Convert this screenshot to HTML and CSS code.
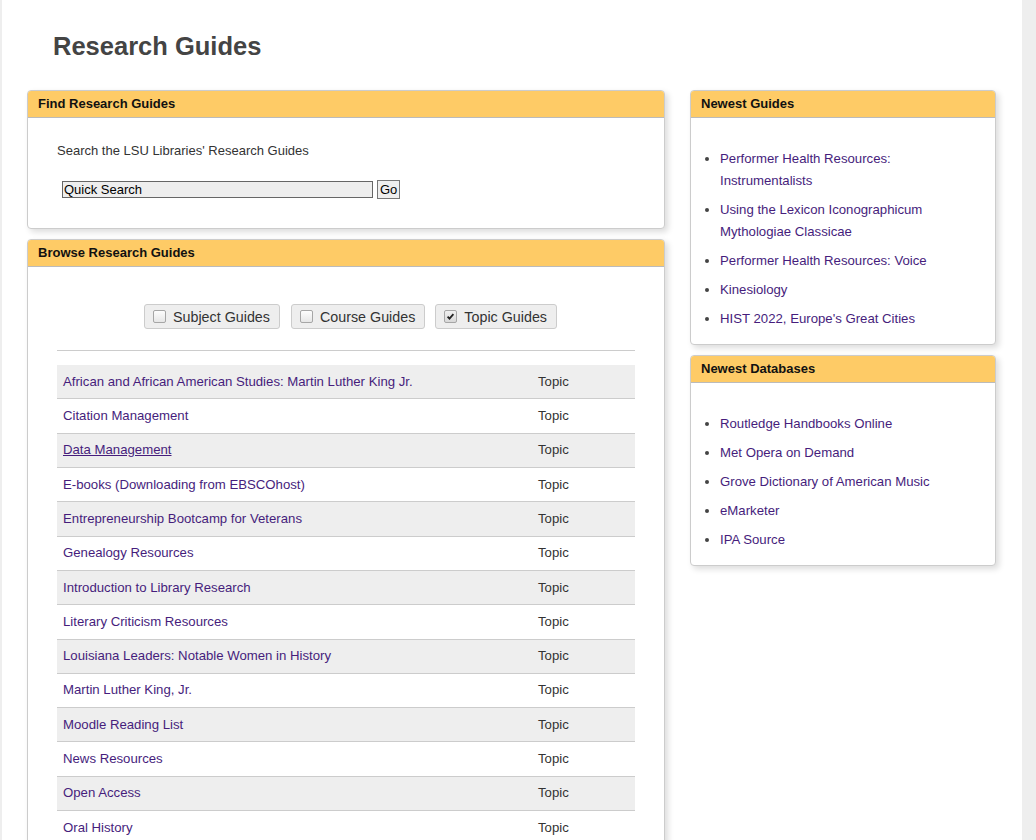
FILE: index.html
```html
<!DOCTYPE html>
<html lang="en">
<head>
<meta charset="utf-8">
<title>Research Guides</title>
<link rel="stylesheet" href="styles.css">
</head>
<body>
<div class="page">
  <h1 class="title">Research Guides</h1>
  <div class="columns">
    <div class="main-col">
      <section class="panel">
        <div class="panel-head">Find Research Guides</div>
        <div class="panel-body find-body">
          <p class="intro">Search the LSU Libraries' Research Guides</p>
          <form class="search-row">
            <input class="search-input" type="text" value="Quick Search">
            <button class="go-btn" type="button">Go</button>
          </form>
        </div>
      </section>
      <section class="panel">
        <div class="panel-head">Browse Research Guides</div>
        <div class="panel-body browse-body">
          <div class="filters">
            <span class="filter f1"><span class="cb"></span>Subject Guides</span>
            <span class="filter f2"><span class="cb"></span>Course Guides</span>
            <span class="filter f3"><span class="cb checked"><svg viewBox="0 0 13 13" width="13" height="13"><path d="M3.6 6.6 L5.5 8.6 L9.4 4.2" fill="none" stroke="#222" stroke-width="1.8"/></svg></span>Topic Guides</span>
          </div>
          <hr class="rule">
          <table class="guides">
            <tr><td class="name"><a href="#">African and African American Studies: Martin Luther King Jr.</a></td><td class="type">Topic</td></tr>
            <tr><td class="name"><a href="#">Citation Management</a></td><td class="type">Topic</td></tr>
            <tr><td class="name"><a href="#" class="ul">Data Management</a></td><td class="type">Topic</td></tr>
            <tr><td class="name"><a href="#">E-books (Downloading from EBSCOhost)</a></td><td class="type">Topic</td></tr>
            <tr><td class="name"><a href="#">Entrepreneurship Bootcamp for Veterans</a></td><td class="type">Topic</td></tr>
            <tr><td class="name"><a href="#">Genealogy Resources</a></td><td class="type">Topic</td></tr>
            <tr><td class="name"><a href="#">Introduction to Library Research</a></td><td class="type">Topic</td></tr>
            <tr><td class="name"><a href="#">Literary Criticism Resources</a></td><td class="type">Topic</td></tr>
            <tr><td class="name"><a href="#">Louisiana Leaders: Notable Women in History</a></td><td class="type">Topic</td></tr>
            <tr><td class="name"><a href="#">Martin Luther King, Jr.</a></td><td class="type">Topic</td></tr>
            <tr><td class="name"><a href="#">Moodle Reading List</a></td><td class="type">Topic</td></tr>
            <tr><td class="name"><a href="#">News Resources</a></td><td class="type">Topic</td></tr>
            <tr><td class="name"><a href="#">Open Access</a></td><td class="type">Topic</td></tr>
            <tr><td class="name"><a href="#">Oral History</a></td><td class="type">Topic</td></tr>
          </table>
        </div>
      </section>
    </div>
    <div class="side-col">
      <section class="panel">
        <div class="panel-head">Newest Guides</div>
        <div class="panel-body side-body">
          <ul class="links">
            <li><a href="#">Performer Health Resources: Instrumentalists</a></li>
            <li><a href="#">Using the Lexicon Iconographicum Mythologiae Classicae</a></li>
            <li><a href="#">Performer Health Resources: Voice</a></li>
            <li><a href="#">Kinesiology</a></li>
            <li><a href="#">HIST 2022, Europe's Great Cities</a></li>
          </ul>
        </div>
      </section>
      <section class="panel">
        <div class="panel-head">Newest Databases</div>
        <div class="panel-body side-body">
          <ul class="links">
            <li><a href="#">Routledge Handbooks Online</a></li>
            <li><a href="#">Met Opera on Demand</a></li>
            <li><a href="#">Grove Dictionary of American Music</a></li>
            <li><a href="#">eMarketer</a></li>
            <li><a href="#">IPA Source</a></li>
          </ul>
        </div>
      </section>
    </div>
  </div>
</div>
</body>
</html>
```
FILE: styles.css
```css
html, body {
  margin: 0;
  padding: 0;
  background: #eeeeee;
  font-family: "Liberation Sans", Arial, sans-serif;
  font-size: 13.2px;
  line-height: 20px;
  color: #333333;
}
.page {
  margin: 0 14px 0 2px;
  background: #ffffff;
  min-height: 840px;
  overflow: hidden;
}
.title {
  margin: 31px 0 29px 51px;
  font-size: 25.5px;
  line-height: 30px;
  font-weight: bold;
  color: #444444;
}
.columns {
  display: flex;
  align-items: flex-start;
  gap: 25px;
  padding: 0 26px 0 25px;
}
.main-col { width: 638px; flex: none; }
.side-col { width: 306px; flex: none; }
.panel {
  border: 1px solid #cccccc;
  border-radius: 4px;
  background: #ffffff;
  box-shadow: 3px 3px 6px rgba(0, 0, 0, 0.14);
  margin-bottom: 10px;
  overflow: hidden;
}
.panel-head {
  background: #fecb66;
  border-bottom: 1px solid #bbbbbb;
  height: 26px;
  line-height: 26px;
  padding: 0 10px;
  font-size: 13px;
  font-weight: bold;
  color: #111111;
}
.find-body { padding: 23px 29px 29px; }
.intro {
  margin: 0 0 19px;
  font-size: 13px;
  line-height: 20px;
}
.search-row {
  display: flex;
  align-items: center;
  margin: 0 0 0 5px;
}
.search-input {
  box-sizing: border-box;
  width: 311px;
  height: 17px;
  margin: 0;
  padding: 0 0 0 1px;
  border: 1px solid #666666;
  background: #eeeeee;
  font-family: "Liberation Sans", Arial, sans-serif;
  font-size: 13px;
  color: #000000;
  outline: none;
}
.go-btn {
  box-sizing: border-box;
  height: 19px;
  margin: 0 0 0 4px;
  padding: 0 2px;
  border: 1px solid #777777;
  background: #eeeeee;
  font-family: "Liberation Sans", Arial, sans-serif;
  font-size: 13px;
  color: #000000;
}
.browse-body { padding: 37px 29px 0; }
.filters {
  display: flex;
  padding-left: 87px;
}
.filter {
  box-sizing: border-box;
  height: 25px;
  display: inline-flex;
  align-items: center;
  padding: 0 9px 0 8px;
  border: 1px solid #cccccc;
  border-radius: 3px;
  background: #eeeeee;
  font-size: 14.3px;
  color: #333333;
}
.f1 { margin-right: 11px; }
.f2 { margin-right: 10px; }
.cb {
  box-sizing: border-box;
  width: 13px;
  height: 13px;
  margin-right: 7px;
  border: 1px solid #a6a6a6;
  border-radius: 2px;
  background: linear-gradient(#fdfdfd, #e6e6e6);
  display: inline-flex;
}
.cb.checked { background: linear-gradient(#f0f0f0, #d8d8d8); }
.cb svg { margin: -1px; }
.rule {
  margin: 21px 0 14px;
  border: 0;
  border-top: 1px solid #cccccc;
  height: 0;
}
.guides {
  width: 578px;
  border-collapse: collapse;
}
.guides td {
  padding: 6.67px 6px;
  line-height: 20px;
  border-bottom: 1px solid #cccccc;
}
.guides tr:nth-child(odd) td { background: #eeeeee; }
.guides .name { width: 463px; }
.guides .type { color: #333333; }
a {
  color: #461d7c;
  text-decoration: none;
}
a.ul { text-decoration: underline; }
.side-body { padding: 30px 20px 7px 10px; }
.links {
  margin: 0;
  padding: 0 0 0 19px;
  line-height: 22px;
}
.links li {
  margin-bottom: 7px;
  color: #444444;
}
```
